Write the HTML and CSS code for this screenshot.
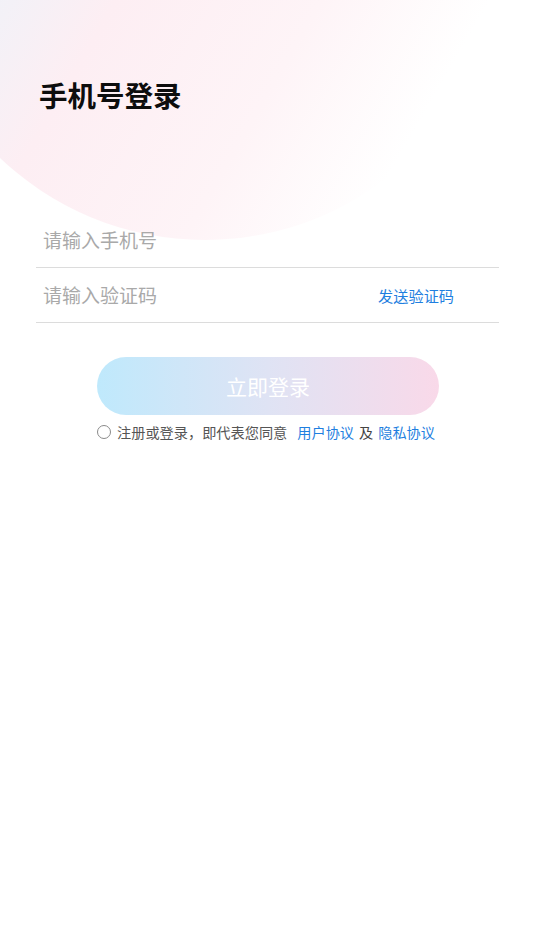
FILE: index.html
```html
<!DOCTYPE html>
<html lang="zh-CN">
<head>
<meta charset="utf-8">
<title>手机号登录</title>
<link rel="stylesheet" href="styles.css">
</head>
<body>
<div class="page">
  <div class="blob"></div>
  <header class="header">
    <h1 class="title">手机号登录</h1>
  </header>
  <form class="form">
    <div class="field">
      <span class="placeholder">请输入手机号</span>
    </div>
    <div class="field">
      <span class="placeholder">请输入验证码</span>
      <span class="send">发送验证码</span>
    </div>
  </form>
  <div class="actions">
    <button class="login" type="button">立即登录</button>
    <div class="agree">
      <span class="radio"></span>
      <span class="agree-text">注册或登录，即代表您同意</span>
      <span class="link link-first">用户协议</span>
      <span class="and">及</span>
      <span class="link">隐私协议</span>
    </div>
  </div>
</div>
</body>
</html>
```
FILE: styles.css
```css
* { box-sizing: border-box; }
html, body {
  margin: 0;
  padding: 0;
  background: #ffffff;
}
body {
  font-family: "Noto Sans CJK SC", "Noto Sans", sans-serif;
  color: #111;
}
.page {
  position: relative;
  width: 535px;
  min-height: 951px;
  overflow: hidden;
}
.blob {
  position: absolute;
  left: -92px;
  top: -354px;
  width: 594px;
  height: 594px;
  border-radius: 50%;
  background: linear-gradient(120deg, #eaf4fb 22%, #fdeef3 44%, #fef4f7 66%, #ffffff 84%);
  z-index: 0;
}
.header, .form, .actions {
  position: relative;
  z-index: 1;
}
.header {
  padding: 75px 0 0 39px;
}
.title {
  margin: 0;
  font-size: 28.5px;
  line-height: 40px;
  font-weight: 700;
  color: #0d0d0d;
}
.form {
  margin: 98px 36px 0 36px;
}
.field {
  display: flex;
  align-items: center;
  justify-content: space-between;
  height: 55px;
  border-bottom: 1px solid #dcdcdc;
  padding: 0 45px 0 7px;
}
.placeholder {
  font-size: 19px;
  color: #a9a9a9;
  line-height: 24px;
}
.send {
  font-size: 15.2px;
  color: #1f7fe0;
  line-height: 20px;
}
.actions {
  display: flex;
  flex-direction: column;
  align-items: center;
  padding-top: 34px;
}
.login {
  width: 342px;
  height: 58px;
  border: none;
  border-radius: 29px;
  background: linear-gradient(90deg, #bfe9fc 0%, #dfe3f4 50%, #f9d9e9 100%);
  color: #ffffff;
  font-family: inherit;
  font-size: 21px;
  padding: 0;
  margin-left: 1px;
}
.agree {
  display: flex;
  align-items: center;
  margin-top: 7px;
  height: 20px;
  font-size: 14.2px;
  line-height: 20px;
  color: #555;
  margin-right: 3px;
}
.radio {
  width: 14px;
  height: 14px;
  border: 1px solid #8a8a8a;
  border-radius: 50%;
  margin-right: 6px;
}
.link {
  color: #1f7fe0;
}
.link-first {
  margin-left: 10px;
}
.and {
  margin: 0 5px;
  color: #444;
}
```
